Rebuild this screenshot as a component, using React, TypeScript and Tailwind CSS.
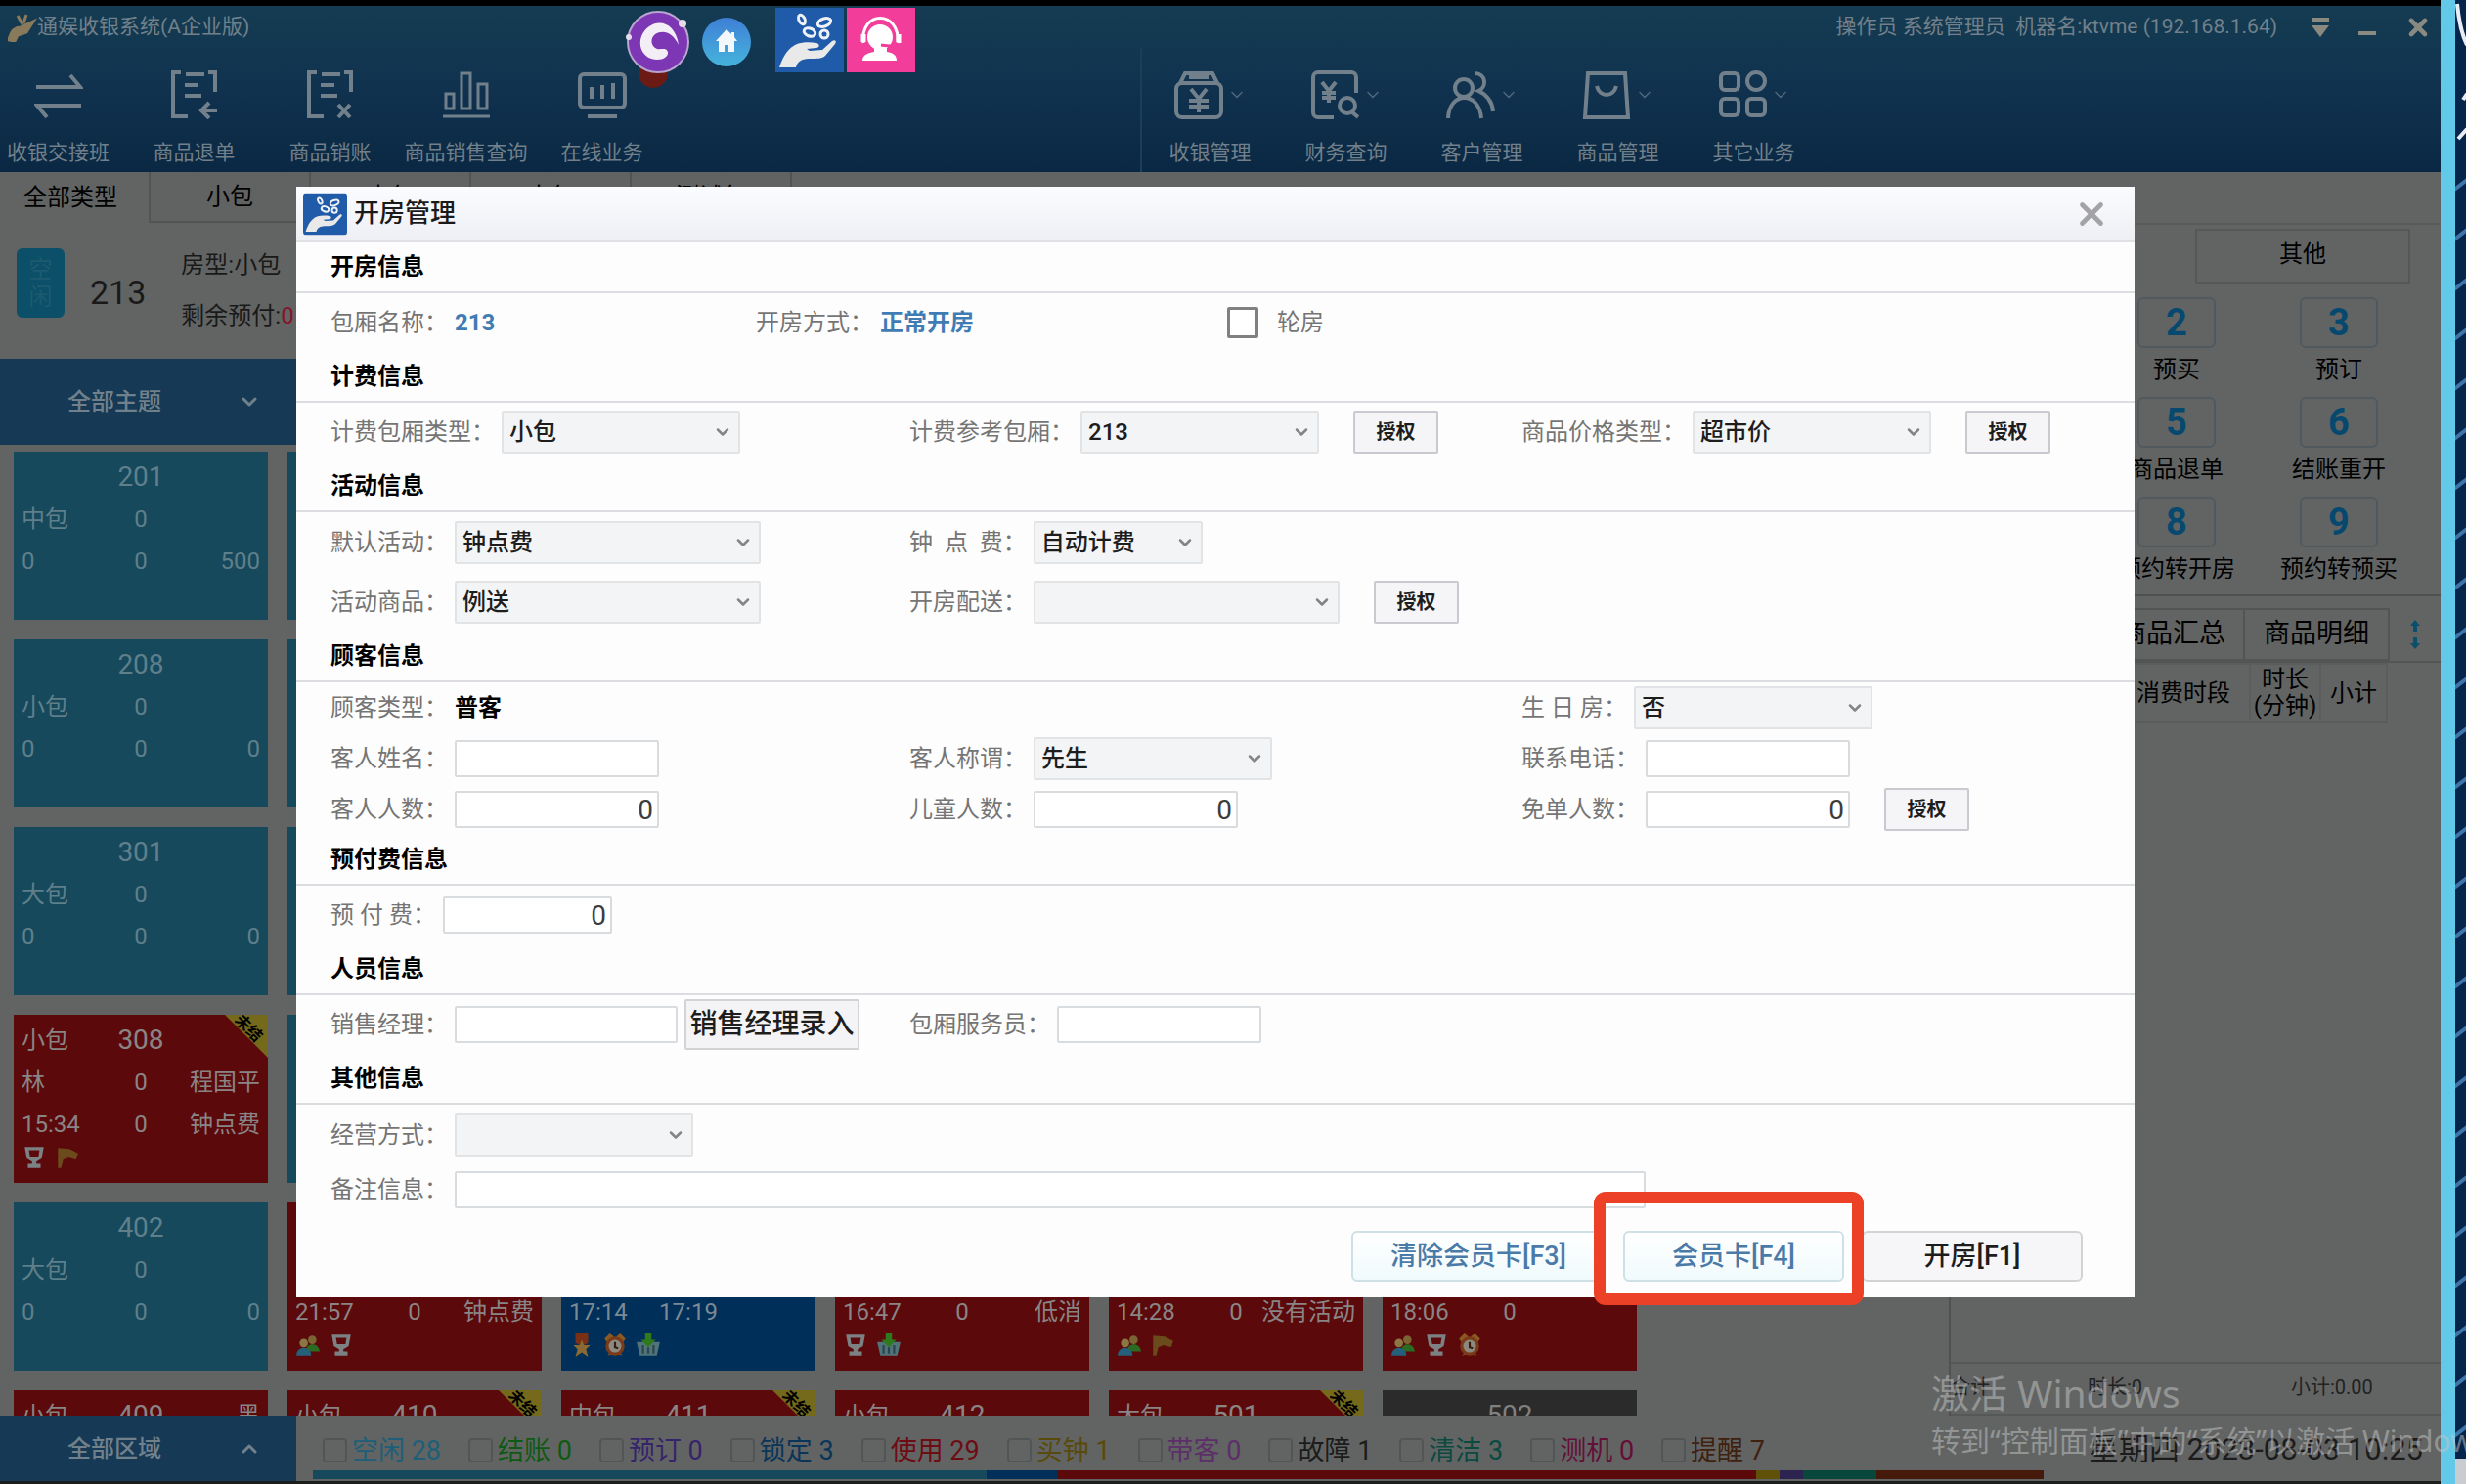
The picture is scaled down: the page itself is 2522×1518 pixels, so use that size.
import { useId } from 'react';
import type { ReactNode } from 'react';
import { ChevronDown, ChevronUp, X } from 'lucide-react';

type Room = {
  color: string;
  no?: string;
  type?: string;
  topRight?: string;
  guest?: string;
  seller?: string;
  time?: string;
  mid?: string;
  count?: string;
  plan?: string;
  icons?: string[];
  unpaid?: boolean;
};

const FREE = 'bg-[#17495c] text-[#5f7f8b]';
const BUSY = 'bg-[#5c090c] text-[#8a8585]';
const LOCKED = 'bg-[#002f59] text-[#7b8a94]';
const BROKEN = 'bg-[#2b2b2b] text-[#808080]';

const free = (no?: string, type?: string, plan?: string): Room => ({ color: FREE, no, guest: type, count: no && '0', time: no && '0', mid: no && '0', plan });

const rooms: Room[] = [
  free('201', '中包', '500'), free(), free(), free(), free(), free(),
  free('208', '小包', '0'), free(), free(), free(), free(), free(),
  free('301', '大包', '0'), free(), free(), free(), free(), free(),
  { color: BUSY, no: '308', type: '小包', guest: '林', count: '0', seller: '程国平', time: '15:34', mid: '0', plan: '钟点费', icons: ['cup', 'flag'], unpaid: true },
  free(), free(), free(), free(), free(),
  free('402', '大包', '0'),
  { color: BUSY, time: '21:57', mid: '0', plan: '钟点费', icons: ['people', 'cup'] },
  { color: LOCKED, time: '17:14', mid: '17:19', icons: ['medal', 'alarm', 'basket'] },
  { color: BUSY, time: '16:47', mid: '0', plan: '低消', icons: ['cup', 'basket'] },
  { color: BUSY, time: '14:28', mid: '0', plan: '没有活动', icons: ['people', 'flag'] },
  { color: BUSY, time: '18:06', mid: '0', icons: ['people', 'cup', 'alarm'] },
  { color: BUSY, no: '409', type: '小包', topRight: '黑' },
  { color: BUSY, no: '410', type: '小包', unpaid: true },
  { color: BUSY, no: '411', type: '中包', unpaid: true },
  { color: BUSY, no: '412', type: '小包' },
  { color: BUSY, no: '501', type: '大包', unpaid: true },
  { color: BROKEN, no: '502' },
];

const statuses = [
  { label: '空闲 28', color: 'text-[#1d5f78]' },
  { label: '结账 0', color: 'text-[#0f5a12]' },
  { label: '预订 0', color: 'text-[#36246b]' },
  { label: '锁定 3', color: 'text-[#0b3558]' },
  { label: '使用 29', color: 'text-[#6e0c14]' },
  { label: '买钟 1', color: 'text-[#584a0a]' },
  { label: '带客 0', color: 'text-[#5d2f68]' },
  { label: '故障 1', color: 'text-[#1c1c1c]' },
  { label: '清洁 3', color: 'text-[#0b4a40]' },
  { label: '测机 0', color: 'text-[#640f36]' },
  { label: '提醒 7', color: 'text-[#40210f]' },
];

const segments = [
  { size: 689, color: 'bg-[#17495c]' },
  { size: 73, color: 'bg-[#002f59]' },
  { size: 714, color: 'bg-[#5c090c]' },
  { size: 24, color: 'bg-[#5f5208]' },
  { size: 24, color: 'bg-[#2c2350]' },
  { size: 75, color: 'bg-[#08483c]' },
  { size: 171, color: 'bg-[#451a0a]' },
];

const quickKeys = [
  ['1', '开房'], ['2', '预买'], ['3', '预订'],
  ['4', '商品落单'], ['5', '商品退单'], ['6', '结账重开'],
  ['7', '预约'], ['8', '预约转开房'], ['9', '预约转预买'],
];

function ToolIcon({ name }: { name: string }) {
  return (
    <svg viewBox="0 0 50 50" className="size-[50px]" fill="none" stroke="currentColor" strokeWidth="4">
      {name === 'swap' && <path d="M2 17H47L37 5M48 36H3l10 12" />}
      {name === 'return' && <path d="M11 2H3v45h15M39 2h7v20M16 4h19M15 15h14M15 26h17M48 41H33m7-8-8 8 8 8" />}
      {name === 'writeoff' && <path d="M11 2H3v45h15M39 2h7v20M16 4h19M15 15h14M15 26h17M33 35l12 13M45 35 33 48" />}
      {name === 'chart' && <path d="M1 47h48M4 39V24h8v15zM20 39V3h9v36zM37 39V14h9v25z" strokeWidth="3" />}
      {name === 'monitor' && <path d="M6 4h38a4 4 0 0 1 4 4v26a4 4 0 0 1-4 4H6a4 4 0 0 1-4-4V8a4 4 0 0 1 4-4zM10 47h30M14 17v12M25 15v14M36 13v16" />}
      {name === 'cash' && <path d="M8 13h34a6 6 0 0 1 6 6v23a6 6 0 0 1-6 6H8a6 6 0 0 1-6-6V19a6 6 0 0 1 6-6zM6 13l5-10h28l5 10M15 7h20M17 19l8 10 8-10M25 29v14M15 31h20M15 37h20" />}
      {name === 'finance' && <path d="M24 48H8a5 5 0 0 1-5-5V7a5 5 0 0 1 5-5h34a5 5 0 0 1 5 5v16M12 12l7 9 7-9M19 21v12M12 23h14M12 28h14M46 36a8 8 0 1 1-16 0 8 8 0 0 1 16 0zM42 42l7 6" />}
      {name === 'people' && <path d="M27 18a9 9 0 1 1-18 0 9 9 0 0 1 18 0zM2 49c1-28 32-28 34 0M29 3c12 0 13 14 4 18 9 4 14 11 15 21" />}
      {name === 'goods' && <path d="M6 3h38l3 45H3zM15 16c3 12 17 12 20 0" />}
      {name === 'grid' && <path d="M7 3h10a4 4 0 0 1 4 4v9a4 4 0 0 1-4 4H7a4 4 0 0 1-4-4V7a4 4 0 0 1 4-4zM7 29h10a4 4 0 0 1 4 4v9a4 4 0 0 1-4 4H7a4 4 0 0 1-4-4v-9a4 4 0 0 1 4-4zM34 29h10a4 4 0 0 1 4 4v9a4 4 0 0 1-4 4H34a4 4 0 0 1-4-4v-9a4 4 0 0 1 4-4zM48 11a9 9 0 1 1-18 0 9 9 0 0 1 18 0z" />}
    </svg>
  );
}

function RoomIcon({ name }: { name: string }) {
  return (
    <svg viewBox="0 0 24 24" className="size-[26px]">
      {name === 'cup' && <path d="M3 2h18l-2 11-5 3v2h4v4H6v-4h4v-2l-5-3zM7 5l1 6h8l1-6z" fill="#7c8183" fillRule="evenodd" />}
      {name === 'flag' && <path d="M3 3l11 1 8 4-2 6-7-2-5 2-2 8H3z" fill="#6b4a1b" />}
      {name === 'people' && (
        <>
          <circle cx="16" cy="7" r="4" fill="#7a6434" />
          <path d="M10 18c0-9 12-9 13 0z" fill="#2c6b22" />
          <circle cx="8" cy="10" r="4" fill="#8a7744" />
          <path d="M1 22c0-10 14-10 14 0z" fill="#23607c" />
        </>
      )}
      {name === 'medal' && (
        <>
          <path d="M6 1h12v9l-6 3-6-3z" fill="#7b2f14" />
          <path d="M12 7l2 5h6l-4 4 2 7-6-4-6 4 2-7-4-4h6z" fill="#8a6a32" />
        </>
      )}
      {name === 'alarm' && (
        <>
          <path d="M2 6l5-5 4 3-6 6zM22 6l-5-5-4 3 6 6zM5 22l3-4 2 2zM19 22l-3-4-2 2z" fill="#8a5a22" />
          <circle cx="12" cy="13" r="9" fill="#7b3a18" />
          <circle cx="12" cy="13" r="6" fill="#8c8a80" />
          <path d="M12 9v5l3 1" stroke="#3a1a0c" strokeWidth="2" fill="none" />
        </>
      )}
      {name === 'basket' && (
        <>
          <path d="M1 9h22l-3 13H4z" fill="#50747a" />
          <path d="M7 12v8M12 14v6M17 12v8" stroke="#2b454b" strokeWidth="2" />
          <path d="M9 1h6v6h4l-7 7-7-7h4z" fill="#2f7a1c" />
        </>
      )}
    </svg>
  );
}

/* open hand catching coins, the product mark */
function HandLogo({ className }: { className: string }) {
  return (
    <svg viewBox="0 0 70 66" className={className}>
      <rect width="70" height="66" fill="#1f5ba8" />
      <path d="M4 61c4-12 9-20 18-24 6-2 13-2 20-1 4 1 3 5 0 5l-10 1 3 2 13-1 10-9c3-2 5 0 3 3L51 49c-3 3-9 3-14 3-8 0-14 1-16 9z" fill="#e9e9ea" />
      <g fill="#1f5ba8" stroke="#eef2f8" strokeWidth="3">
        <ellipse cx="27" cy="12" rx="3" ry="5" transform="rotate(-25 27 12)" />
        <ellipse cx="50" cy="15" rx="7" ry="4" transform="rotate(-20 50 15)" />
        <ellipse cx="35" cy="25" rx="6" ry="4" transform="rotate(20 35 25)" />
        <ellipse cx="50" cy="27" rx="4" ry="4" />
      </g>
    </svg>
  );
}

function RoomTile({ room }: { room: Room }) {
  return (
    <div className={`relative h-[172px] overflow-hidden px-2 pt-1 text-2xl ${room.color}`}>
      <div className="grid h-[43px] grid-cols-3 items-center">
        <span>{room.type}</span>
        <span className="text-center text-[28px]">{room.no}</span>
        <span className="text-right">{room.topRight}</span>
      </div>
      <div className="grid h-[43px] grid-cols-3 items-center">
        <span>{room.guest}</span>
        <span className="text-center">{room.count}</span>
        <span className="text-right">{room.seller}</span>
      </div>
      <div className="grid h-[43px] grid-cols-3 items-center whitespace-nowrap">
        <span>{room.time}</span>
        <span className="text-center">{room.mid}</span>
        <span className="flex justify-end">{room.plan}</span>
      </div>
      <div className="flex gap-2">
        {room.icons?.map((name) => <RoomIcon key={name} name={name} />)}
      </div>
      {room.unpaid && (
        <div className="absolute top-0 right-0 h-[44px] w-[44px] overflow-hidden bg-[#75691c] [clip-path:polygon(0_0,100%_0,100%_100%)]">
          <span className="absolute top-1 left-2 rotate-45 text-base leading-5 font-bold whitespace-nowrap text-black">未结</span>
        </div>
      )}
    </div>
  );
}

function Section({ title, children }: { title: string; children: ReactNode }) {
  return (
    <section>
      <h3 className="flex h-[52px] items-center border-b-2 border-[#dcdde0] pl-[35px] text-2xl font-bold text-black">{title}</h3>
      {children}
    </section>
  );
}

function Row({ height = 'h-[60px]', cols = 'grid-cols-[592fr_626fr_627fr]', children }: { height?: string; cols?: string; children: ReactNode }) {
  return <div className={`grid items-center pl-[35px] text-2xl text-[#757575] ${height} ${cols}`}>{children}</div>;
}

function TextField({ label, width, value = '', children }: { label: string; width: string; value?: string; children?: ReactNode }) {
  const id = useId();
  return (
    <div className="flex items-center">
      <label htmlFor={id} className="mr-[7px] whitespace-pre">{label}</label>
      <input id={id} defaultValue={value} className={`h-[38px] rounded-xs border-2 border-[#d9dcdf] bg-white px-1 text-right text-[28px] leading-8 text-[#3c3c3c] ${width}`} />
      {children}
    </div>
  );
}

function SelectField({ label, width, value = '', children }: { label: string; width: string; value?: string; children?: ReactNode }) {
  const id = useId();
  return (
    <div className="flex items-center">
      <label htmlFor={id} className="mr-[7px] whitespace-pre">{label}</label>
      <div className={`relative ${width}`}>
        <select id={id} className="h-[44px] w-full appearance-none rounded-xs border-2 border-[#e2e3e5] bg-[#f3f4f5] px-1.5 font-medium text-[#1d1d1d]">
          <option>{value}</option>
        </select>
        <ChevronDown className="pointer-events-none absolute top-3 right-2 size-5 text-[#848484]" strokeWidth={3} />
      </div>
      {children}
    </div>
  );
}

function AuthButton({ gap }: { gap: string }) {
  return (
    <button className={`h-[44px] w-[87px] rounded-xs border-2 border-[#c9c9cf] bg-[#f5f5f8] text-xl font-bold text-[#1d1d1d] ${gap}`}>授权</button>
  );
}

function RoomDialog() {
  return (
    <div role="dialog" aria-label="开房管理" className="absolute top-[191px] right-[339px] left-[303px] bg-[#fdfdfd]">
      <header className="flex h-[57px] items-center border-b-2 border-[#dfe1e5] bg-linear-to-b from-[#fbfcff] to-[#eeeff4] pr-[25px] pl-[7px]">
        <HandLogo className="h-[44px] w-[45px] rounded-sm" />
        <h2 className="ml-[7px] flex-1 text-[26px] font-medium text-[#1a1a1a]">开房管理</h2>
        <button aria-label="关闭"><X className="size-[38px] text-[#a3a3a5]" strokeWidth={3} /></button>
      </header>

      <Section title="开房信息">
        <Row height="h-[60px]" cols="grid-cols-[435fr_482fr_928fr]">
          <p>包厢名称：<b className="ml-[7px] text-[#3f7cb4]">213</b></p>
          <p>开房方式：<b className="ml-[7px] text-[#3f7cb4]">正常开房</b></p>
          <label className="flex items-center gap-[19px]">
            <input type="checkbox" className="size-8 appearance-none rounded-xs border-3 border-[#808080] bg-white" />
            轮房
          </label>
        </Row>
      </Section>

      <Section title="计费信息">
        <Row>
          <SelectField label="计费包厢类型：" width="w-[244px]" value="小包" />
          <SelectField label="计费参考包厢：" width="w-[244px]" value="213"><AuthButton gap="ml-[35px]" /></SelectField>
          <SelectField label="商品价格类型：" width="w-[244px]" value="超市价"><AuthButton gap="ml-[35px]" /></SelectField>
        </Row>
      </Section>

      <Section title="活动信息">
        <Row height="h-[61px]">
          <SelectField label="默认活动：" width="w-[313px]" value="钟点费" />
          <SelectField label="钟  点  费：" width="w-[173px]" value="自动计费" />
        </Row>
        <Row height="h-[61px]">
          <SelectField label="活动商品：" width="w-[313px]" value="例送" />
          <SelectField label="开房配送：" width="w-[313px]"><AuthButton gap="ml-[35px]" /></SelectField>
        </Row>
      </Section>

      <Section title="顾客信息">
        <Row height="h-[52px]">
          <p>顾客类型：<b className="ml-[7px] text-black">普客</b></p>
          <span />
          <SelectField label="生 日 房：" width="w-[244px]" value="否" />
        </Row>
        <Row height="h-[52px]">
          <TextField label="客人姓名：" width="w-[209px]" />
          <SelectField label="客人称谓：" width="w-[244px]" value="先生" />
          <TextField label="联系电话：" width="w-[209px]" />
        </Row>
        <Row height="h-[52px]">
          <TextField label="客人人数：" width="w-[209px]" value="0" />
          <TextField label="儿童人数：" width="w-[209px]" value="0" />
          <TextField label="免单人数：" width="w-[209px]" value="0"><AuthButton gap="ml-[35px]" /></TextField>
        </Row>
      </Section>

      <Section title="预付费信息">
        <Row><TextField label="预 付 费：" width="w-[173px]" value="0" /></Row>
      </Section>

      <Section title="人员信息">
        <Row>
          <TextField label="销售经理：" width="w-[228px]">
            <button className="ml-[7px] h-[52px] w-[179px] rounded-xs border-2 border-[#d3d3d6] bg-[#f4f4f6] text-[28px] leading-8 font-medium text-[#1d1d1d]">销售经理录入</button>
          </TextField>
          <TextField label="包厢服务员：" width="w-[209px]" />
        </Row>
      </Section>

      <Section title="其他信息">
        <Row height="h-[61px]"><SelectField label="经营方式：" width="w-[244px]" /></Row>
        <Row height="h-[52px]"><TextField label="备注信息：" width="w-[1218px]" /></Row>
      </Section>

      <footer className="flex h-[84px] items-center justify-end gap-[18px] pr-[53px] text-[27px] font-medium">
        <button className="h-[52px] w-[260px] rounded-md border-2 border-[#cfdfe6] bg-linear-to-b from-white to-[#f0fafc] text-[#4a7aa8]">清除会员卡[F3]</button>
        <div className="relative">
          <button className="h-[52px] w-[226px] rounded-md border-2 border-[#cfdfe6] bg-linear-to-b from-white to-[#f0fafc] text-[#4a7aa8]">会员卡[F4]</button>
          <div className="pointer-events-none absolute -top-[40px] -right-[20px] -bottom-[24px] -left-[30px] z-10 rounded-xl border-12 border-[#ec4127]" />
        </div>
        <button className="h-[52px] w-[226px] rounded-md border-2 border-[#d3d3d6] bg-[#f6f6f9] text-[#1d1d1d]">开房[F1]</button>
      </footer>
    </div>
  );
}

function TopBar() {
  return (
    <header className="h-[170px] bg-linear-to-b from-[#153c52] via-[#10324f] via-50% to-[#0a2843] text-[#71808a]">
      <div className="flex h-[44px] items-center justify-between pr-[9px] pl-2">
        <div className="flex items-center text-[21px]">
          <svg viewBox="0 0 30 30" className="size-[30px]"><path d="M1 28c2-9 6-13 12-13l13-6-7 11-9 3-3 6zM10 3l5 9M19 2l-3 9" fill="#8a7a5c" stroke="#8a7a5c" strokeWidth="3" /></svg>
          通娱收银系统(A企业版)
        </div>
        <div className="flex items-center text-[21px]">
          <span className="mr-[34px] whitespace-pre">操作员 系统管理员  机器名:ktvme (192.168.1.64)</span>
          <button aria-label="菜单" className="mr-[28px]">
            <svg viewBox="0 0 20 22" className="h-[22px] w-5"><path d="M1 1h18v4H1zM1 9h18l-9 12z" fill="#8a8a80" /></svg>
          </button>
          <button aria-label="最小化" className="mr-[28px]">
            <svg viewBox="0 0 20 22" className="h-[22px] w-5"><path d="M1 15h18v4H1z" fill="#8a8a80" /></svg>
          </button>
          <button aria-label="退出"><X className="size-7 text-[#8a8a80]" strokeWidth={4} /></button>
        </div>
      </div>
      <nav className="flex text-[21px] leading-6">
        <div className="-ml-2.5 flex flex-[1177]">
          {[['swap', '收银交接班'], ['return', '商品退单'], ['writeoff', '商品销账'], ['chart', '商品销售查询'], ['monitor', '在线业务']].map(([icon, label]) => (
            <button key={icon} className="flex h-[126px] w-[139px] flex-col items-center gap-[22px] pt-[22px]">
              <ToolIcon name={icon} />
              {label}
            </button>
          ))}
        </div>
        <div className="flex flex-[1329] border-l-2 border-[#1c3f58]">
          {[['cash', '收银管理'], ['finance', '财务查询'], ['people', '客户管理'], ['goods', '商品管理'], ['grid', '其它业务']].map(([icon, label]) => (
            <button key={icon} className="flex h-[126px] w-[139px] flex-col items-center gap-[22px] pt-[22px]">
              <span className="flex items-center gap-1">
                <ToolIcon name={icon} />
                <ChevronDown className="size-5 text-[#4b6478]" />
              </span>
              {label}
            </button>
          ))}
        </div>
      </nav>
    </header>
  );
}

function RoomArea() {
  return (
    <div className="flex min-w-0 flex-[1993] flex-col">
      <div className="flex h-[52px] text-2xl text-black">
        <button className="w-[152px] pr-2">全部类型</button>
        {['小包', '中包', '大包', '测试包'].map((name) => (
          <button key={name} className="w-[164px] border-b-2 border-l-2 border-[#525454] bg-[#616363]">{name}</button>
        ))}
        <div className="flex-1 border-l-2 border-[#525454]" />
      </div>
      <div className="flex h-[139px] items-start pl-[17px] text-2xl text-[#191919]">
        <div className="mt-[26px] flex h-[71px] w-[49px] items-center justify-center rounded-md bg-[#0b5068] px-3 text-center leading-7 text-[#1d5a6f]">空闲</div>
        <span className="mt-[51px] ml-[26px] text-[34px] leading-10">213</span>
        <div className="ml-[36px] pt-[17px] leading-[52px]">
          <p>房型:小包</p>
          <p>剩余预付:<span className="text-[#85152c]">0</span></p>
        </div>
      </div>
      <button className="flex h-[88px] w-[303px] items-center bg-[#163a55] pr-[36px] pl-[69px] text-2xl font-medium text-[#71818c]">
        <span className="flex-1 text-left">全部主题</span>
        <ChevronDown className="size-6" strokeWidth={3} />
      </button>
      <div className="min-h-0 flex-1 overflow-hidden pt-[7px] pl-[14px]">
        <div className="grid grid-cols-[repeat(6,260px)] gap-5">
          {rooms.map((room, i) => <RoomTile key={i} room={room} />)}
        </div>
      </div>
    </div>
  );
}

function OrderPanel() {
  return (
    <aside className="flex min-w-0 flex-[503] flex-col text-2xl text-black">
      <div className="mt-[52px] flex h-[62px] items-end border-t-2 border-[#585a5a]">
        <button className="h-full flex-1 text-center">常用</button>
        <button className="h-[56px] w-[220px] border-2 border-[#565858] pb-1">其他</button>
        <div className="w-[31px]" />
      </div>
      <div className="grid h-[320px] grid-cols-[148px_166px_166px] border-b-2 border-l-2 border-[#505252] pt-[14px]">
        {quickKeys.map(([key, label]) => (
          <button key={key} className="flex h-[102px] flex-col items-center gap-1 whitespace-nowrap">
            <span className="flex h-[52px] w-[80px] shrink-0 items-center justify-center rounded-md border-2 border-[#505a5e] text-[38px] leading-10 font-bold text-[#07496e]">{key}</span>
            <span className="flex h-9 items-center justify-center">{label}</span>
          </button>
        ))}
      </div>
      <div className="flex min-h-0 flex-1 flex-col border-l-2 border-[#505252]">
        <div className="mt-[12px] flex h-[56px] items-stretch border-b-2 border-[#535555] text-[27px]">
          <button className="flex-1" />
          <button className="w-[148px] border-2 border-[#535555]">商品汇总</button>
          <button className="w-[148px] border-2 border-l-0 border-[#535555]">商品明细</button>
          <div className="flex w-[52px] items-center justify-center">
            <svg viewBox="0 0 12 30" className="h-[30px] w-3"><path d="M6 0l5 6H8v6H4V6H1zM6 30l5-6H8v-6H4v6H1z" fill="#0c4f6c" /></svg>
          </div>
        </div>
        <table className="mr-[54px] h-[62px] w-[278px] table-fixed self-end leading-[27px]">
          <thead>
            <tr>
              <th className="w-[136px] border-2 border-[#5b5d5d] p-0 font-normal">消费时段</th>
              <th className="w-[72px] border-2 border-[#5b5d5d] p-0 font-normal">时长<br />(分钟)</th>
              <th className="border-2 border-[#5b5d5d] p-0 font-normal">小计</th>
            </tr>
          </thead>
        </table>
        <div className="mt-auto flex h-[55px] items-center border-y-2 border-[#565858] pb-1 text-xl text-[#222]">
          <span className="w-[140px]">合计</span>
          <span className="w-[208px]">时长:0</span>
          <span>小计:0.00</span>
        </div>
      </div>
    </aside>
  );
}

function StatusBar() {
  return (
    <footer className="flex h-[67px]">
      <button className="flex w-[303px] items-center bg-[#163a55] pr-[36px] pl-[69px] text-2xl font-medium text-[#71818c]">
        <span className="flex-1 text-left">全部区域</span>
        <ChevronUp className="size-6" strokeWidth={3} />
      </button>
      <div className="flex min-w-0 flex-[1770] flex-col pl-[17px]">
        <div className="flex h-[56px] items-end gap-7 pl-[10px] text-[27px]">
          {statuses.map(({ label, color }) => (
            <label key={label} className={`flex items-center gap-[5px] whitespace-nowrap ${color}`}>
              <input type="checkbox" className="size-[25px] appearance-none rounded-sm border-2 border-[#525555]" />
              {label}
            </label>
          ))}
        </div>
        <div className="flex h-[9px]">
          {segments.map(({ size, color }) => <div key={color} className={color} style={{ flexGrow: size }} />)}
        </div>
      </div>
      <div className="flex min-w-0 flex-[388] items-center justify-end pt-1 pr-[18px] text-[31px] whitespace-nowrap text-[#1c1c1c]">
        星期四 2023-08-03 10:25
      </div>
    </footer>
  );
}

/* launcher icons that float above every window */
function FloatingLauncher() {
  return (
    <>
      <svg viewBox="0 0 30 30" className="absolute top-[60px] left-[653px] size-[30px]"><circle cx="15" cy="15" r="15" fill="#6b1b14" /></svg>
      <svg viewBox="0 0 66 66" className="absolute top-[10px] left-[640px] size-[66px]">
        <circle cx="33" cy="33" r="31" fill="#7d36b4" stroke="#b9a5cf" strokeWidth="2" />
        <path d="M54 36C51 15 36 9 24 17 11 26 12 45 26 50c9 3 18-1 17-7-2-5-7-2-11-3-7-3-7-11-2-15 8-5 18-2 24 11z" fill="#f3eef6" />
        <circle cx="58" cy="14" r="4" fill="#e4dcea" />
        <circle cx="3" cy="28" r="3" fill="#e4dcea" />
      </svg>
      <svg viewBox="0 0 50 50" className="absolute top-[18px] left-[718px] size-[50px]">
        <defs>
          <linearGradient id="home" x1="0" y1="0" x2="0" y2="1">
            <stop offset="0" stopColor="#3f7fd6" />
            <stop offset="1" stopColor="#45b4dc" />
          </linearGradient>
        </defs>
        <circle cx="25" cy="25" r="25" fill="url(#home)" />
        <path d="M25 12 14 24h3v11h6v-7h4v7h6V24h3l-3-4v-5h-3v2z" fill="#f4f8fc" />
      </svg>
      <HandLogo className="absolute top-2 left-[793px] h-[66px] w-[70px]" />
      <svg viewBox="0 0 70 66" className="absolute top-2 left-[866px] h-[66px] w-[70px]">
        <rect width="70" height="66" fill="#f23d9b" />
        <circle cx="34" cy="30" r="13" fill="#fff" />
        <path d="M16 54c0-6 6-8 12-9v-6h13v6c6 1 10 3 10 9z" fill="#fff" />
        <path d="M17 36c-4-34 38-34 35 0" fill="none" stroke="#fff" strokeWidth="3" />
        <path d="M17 27v8M53 27v9" stroke="#fff" strokeWidth="5" />
        <path d="M52 36c-3 4-9 3-17 2" fill="none" stroke="#f23d9b" strokeWidth="3" />
      </svg>
    </>
  );
}

export default function App() {
  return (
    <div className="relative flex h-screen overflow-hidden bg-black font-['Roboto','Noto_Sans_CJK_SC',sans-serif]">
      <div className="flex min-w-0 flex-1 flex-col border-t-6 border-b-3 border-t-black border-b-[#1c1e1e] bg-[#626464]">
        <TopBar />
        <main className="flex min-h-0 flex-1">
          <RoomArea />
          <OrderPanel />
        </main>
        <StatusBar />
      </div>
      <div className="w-[15px] bg-[#63c9e8]" />
      <svg viewBox="0 0 11 1518" preserveAspectRatio="none" className="h-full w-[11px] bg-[#06254a]">
        {Array.from({ length: 26 }, (_, i) => (
          <path key={i} d={`M-1 ${194 + i * 51}L12 ${184 + i * 51}`} stroke="#3f74a8" strokeWidth="4" />
        ))}
        <path d="M2 4C4 25 8 38 12 46M3 142l9-10M8 102l4-6" stroke="#e8eef4" strokeWidth="4" fill="none" />
        <rect y="1492" width="11" height="26" fill="#c9ccd0" />
      </svg>

      <RoomDialog />
      <FloatingLauncher />

      <div className="pointer-events-none absolute top-[1396px] left-[1975px] font-['Noto_Sans','Noto_Sans_CJK_SC',sans-serif] whitespace-nowrap text-[#c4c4c4]/50">
        <p className="text-[39px] leading-[58px]">激活 Windows</p>
        <p className="text-[30px] leading-10">转到“控制面板”中的“系统”以激活 Windows。</p>
      </div>
    </div>
  );
}
